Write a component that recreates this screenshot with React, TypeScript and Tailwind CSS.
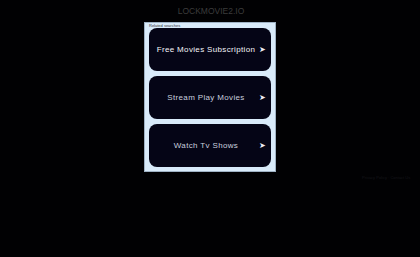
const links = [
  { label: 'Free Movies Subscription', bright: true },
  { label: 'Stream Play Movies', bright: false },
  { label: 'Watch Tv Shows', bright: false },
]

export default function App() {
  return (
    <div className="relative min-h-[257px] w-[420px] bg-[#010103] font-['Liberation_Sans',Arial,sans-serif]">
      {/* Domain title */}
      <div className="pl-[2px] pt-[6px] text-center text-[8.5px] font-light leading-[10px] text-[#3c3c3c]">
        LOCKMOVIE2.IO
      </div>

      {/* Related searches panel */}
      <div className="mx-auto mt-[6px] w-[132px] border border-[#9fb2c4] bg-[#d9ebfa] px-[4px] pb-[4px]">
        <div className="h-[5px] text-[4px] leading-[5px] text-[#333]">Related searches</div>
        <div className="flex flex-col gap-[5px]">
          {links.map((link) => (
            <a
              key={link.label}
              href="#"
              className="flex h-[43px] items-center justify-center rounded-[8px] bg-[#050516] pl-[4px] pr-[5px]"
            >
              <span
                className={
                  'flex-1 text-center text-[8px] tracking-[0.35px] ' +
                  (link.bright ? 'text-[#f4f4f8]' : 'text-[#c8cede]')
                }
              >
                {link.label}
              </span>
              <span className="text-[8px] leading-none text-[#f0f0f6]">➤</span>
            </a>
          ))}
        </div>
      </div>

      {/* Faint footer text */}
      <div className="absolute left-[362px] top-[175px] text-[4px] text-[#15151a]">
        Privacy Policy · Contact Us
      </div>
    </div>
  )
}
